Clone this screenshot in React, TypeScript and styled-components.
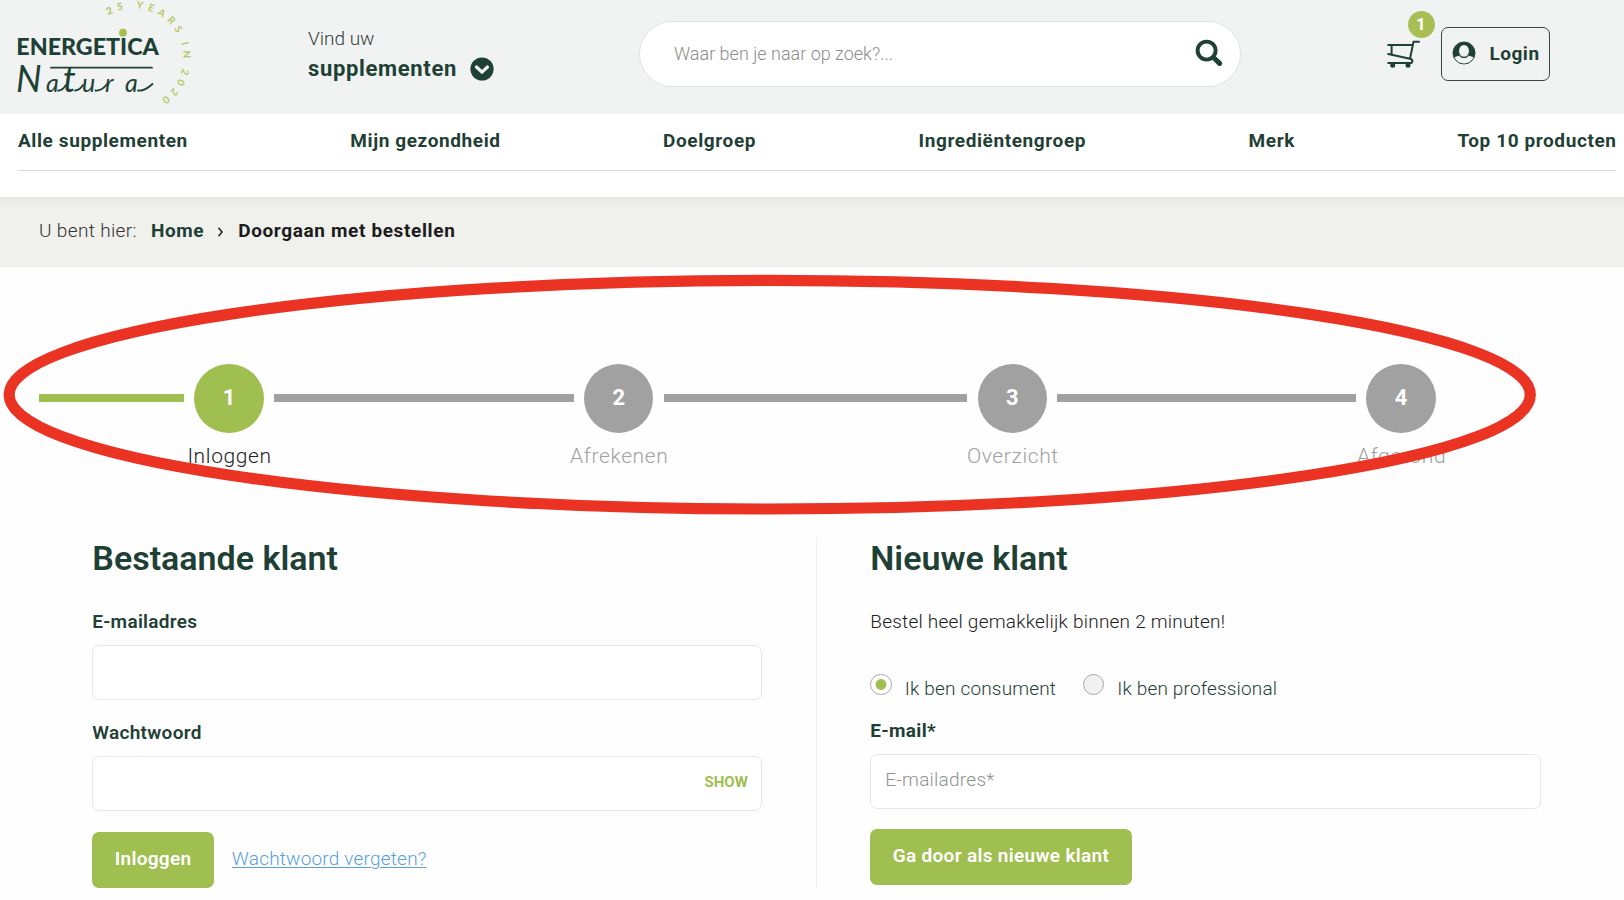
import React from "react";
import styled, { createGlobalStyle } from "styled-components";

const green = "#9fbf50";
const dark = "#1f4035";
const grey = "#a1a1a1";

const GlobalStyle = createGlobalStyle`
  *, *::before, *::after { box-sizing: border-box; }
  body {
    margin: 0;
    background: #fefefe;
    color: #222;
    font-family: Roboto, "Liberation Sans", sans-serif;
    font-size: 19px;
    overflow: hidden;
  }
  button, input { font: inherit; }
`;

const Page = styled.div`
  position: relative;
  width: 1624px;
  height: 900px;
  overflow: hidden;
`;

const TopBar = styled.header`
  display: flex;
  align-items: flex-start;
  height: 114px;
  background: #f0f3f2;
`;

const LogoLink = styled.a`
  flex: 0 0 308px;
  height: 114px;
`;

const Finder = styled.div`
  flex: 0 0 331px;
  padding-top: 26.5px;
  color: ${dark};
`;

const FinderHint = styled.div`
  font-weight: 300;
  line-height: 24px;
  color: #333f3a;
`;

const FinderTitle = styled.div`
  display: flex;
  align-items: center;
  gap: 13.5px;
  margin-top: 4px;
  font-size: 22px;
  font-weight: 700;
  line-height: 28px;
  letter-spacing: 0.66px;
`;

const SearchBox = styled.label`
  display: flex;
  align-items: center;
  justify-content: space-between;
  width: 602px;
  height: 66px;
  margin-top: 21px;
  padding: 0 17px 2px 34px;
  border: 1px solid #dfe3e1;
  border-radius: 33px;
  background: #fff;
`;

const SearchInput = styled.input`
  flex: 1;
  border: 0;
  outline: 0;
  padding: 0;
  background: transparent;
  font-size: 18px;
  font-weight: 300;
  &::placeholder { color: #8c8c8c; opacity: 1; }
`;

const CartButton = styled.a`
  position: relative;
  width: 34px;
  height: 28px;
  margin: 40px 0 0 145.5px;
`;

const CartCount = styled.span`
  position: absolute;
  left: 21px;
  top: -29px;
  width: 27px;
  height: 27px;
  border-radius: 50%;
  background: #a9bf55;
  color: #fff;
  font-size: 17px;
  font-weight: 700;
  line-height: 26px;
  text-align: center;
`;

const LoginButton = styled.button`
  display: flex;
  align-items: center;
  gap: 13.5px;
  width: 109.5px;
  height: 54px;
  margin: 27px 0 0 20px;
  padding: 0 0 2px 10.5px;
  border: 1.4px solid #3a4642;
  border-radius: 7px;
  background: transparent;
  color: ${dark};
  font-weight: 700;
  letter-spacing: 0.5px;
`;

const NavArea = styled.div`
  height: 83px;
  padding: 0 8px 0 18px;
  background: #fff;
`;

const Nav = styled.nav`
  display: flex;
  align-items: center;
  justify-content: space-between;
  height: 57px;
  padding-bottom: 3px;
  border-bottom: 1px solid #d6d9d8;
`;

const NavItem = styled.a`
  color: ${dark};
  font-weight: 700;
  letter-spacing: 0.6px;
  margin-right: -0.6px;
`;

const Crumbs = styled.div`
  display: flex;
  align-items: center;
  height: 69.5px;
  padding: 0 0 2px 39px;
  background: linear-gradient(#e6e6e2, #f0f0ec 11px);
  font-weight: 300;
  letter-spacing: 0.36px;
  color: #333;
`;

const Crumb = styled.a<{ $current?: boolean }>`
  font-weight: 700;
  letter-spacing: ${(p) => (p.$current ? 0.63 : 0.6)}px;
  color: ${(p) => (p.$current ? "#1c1c1c" : dark)};
`;

const HomeCrumb = styled(Crumb)`
  margin: 0 13px 0 14px;
`;

const CrumbArrow = styled.svg`
  margin: 3px 14px 0 0;
`;

const Stepper = styled.ol`
  display: flex;
  gap: 10.4px;
  margin: 0;
  padding: 97px 0 0 39px;
  height: 271.5px;
  list-style: none;
`;

const StepTrack = styled.li<{ $width: number; $active?: boolean }>`
  flex: 0 0 ${(p) => p.$width}px;
  height: 8px;
  margin-top: 30.9px;
  background: ${(p) => (p.$active ? green : grey)};
`;

const Step = styled.li<{ $active?: boolean }>`
  display: flex;
  flex: 0 0 69.4px;
  min-width: 0;
  flex-direction: column;
  align-items: center;
  color: ${(p) => (p.$active ? "#222" : grey)};
`;

const StepDot = styled.span<{ $active?: boolean }>`
  display: flex;
  align-items: center;
  justify-content: center;
  width: 69.4px;
  height: 69.4px;
  padding-bottom: 2px;
  border-radius: 50%;
  background: ${(p) => (p.$active ? green : grey)};
  color: #fff;
  font-size: 22px;
  font-weight: 700;
`;

const StepLabel = styled.span`
  margin: 9.5px -1px 0 0;
  font-size: 21px;
  font-weight: 300;
  line-height: 28px;
  letter-spacing: 0.63px;
  white-space: nowrap;
`;

const Marker = styled.svg`
  position: absolute;
  left: 0;
  top: 265px;
  pointer-events: none;
`;

const Forms = styled.main`
  display: grid;
  grid-template-columns: 670px 725px;
  column-gap: 54px;
  padding-left: 92.3px;
`;

const Column = styled.section`
  display: flex;
  flex-direction: column;
  align-items: flex-start;
  height: 350px;
`;

const NewColumn = styled(Column)`
  padding-left: 53px;
  border-left: 1px solid #f0f0f0;
`;

const Heading = styled.h2`
  margin: 0;
  color: ${dark};
  font-size: 34px;
  font-weight: 600;
  line-height: 40px;
`;

const Intro = styled.p`
  margin: 32px 0 43px;
  font-weight: 300;
  line-height: 24px;
  letter-spacing: 0.22px;
`;

const FieldLabel = styled.label<{ $gap: number; $bold?: boolean }>`
  margin: ${(p) => p.$gap}px 0 10.8px;
  color: ${dark};
  font-weight: ${(p) => (p.$bold ? 700 : 600)};
  line-height: 24px;
  letter-spacing: 0.3px;
`;

const Field = styled.div`
  display: flex;
  align-items: center;
  width: 100%;
  height: 55.2px;
  padding: 0 13.5px 0 14px;
  border: 1.5px solid #e6e6e6;
  border-radius: 7px;
  background: #fff;
`;

const FieldInput = styled.input`
  flex: 1;
  min-width: 0;
  padding: 0 0 4px;
  border: 0;
  outline: 0;
  background: transparent;
  font-weight: 300;
  letter-spacing: 0.25px;
  &::placeholder { color: #8d9390; opacity: 1; }
`;

const ShowToggle = styled.button`
  padding: 0 0 3px;
  border: 0;
  background: none;
  color: ${green};
  font-size: 15px;
  font-weight: 700;
`;

const Actions = styled.div`
  display: flex;
  align-items: center;
  gap: 18px;
  margin-top: 20.2px;
`;

const Button = styled.button`
  height: 56px;
  padding: 0 22.4px 3px;
  border: 0;
  border-radius: 7px;
  background: ${green};
  color: #fff;
  font-weight: 600;
  letter-spacing: 0.32px;
`;

const ForgotLink = styled.a`
  padding-bottom: 3px;
  color: #5aa0dc;
  font-weight: 300;
  letter-spacing: 0.2px;
  text-decoration: underline;
  text-decoration-thickness: 1px;
  text-underline-offset: 2px;
`;

const RadioRow = styled.div`
  display: flex;
  gap: 26.5px;
  line-height: 24px;
`;

const RadioOption = styled.label`
  display: flex;
  align-items: flex-start;
  gap: 13px;
  color: ${dark};
  font-weight: 300;
  letter-spacing: 0.17px;
`;

const RadioMark = styled.span<{ $on?: boolean }>`
  width: 21.5px;
  height: 21.5px;
  margin-top: -3.5px;
  border: 1.3px solid #a6a6a6;
  border-radius: 50%;
  background: ${(p) => (p.$on ? `radial-gradient(circle, ${green} 5px, #fff 5.8px)` : "#f1f1f1")};
`;

const Logo = () => (
  <svg width="200" height="114" viewBox="0 0 200 114">
    <defs>
      <path id="ring" d="M101.9 20 A49.5 49.5 0 1 1 142.3 106.6" />
    </defs>
    <g fontFamily="Lato, sans-serif" fill={dark}>
      <text x="16.3" y="55.3" fontSize="23" fontWeight="900" textLength="142.5" lengthAdjust="spacingAndGlyphs">ENERGETICA</text>
      <text y="91.5" fontStyle="italic" fontWeight="400">
        <tspan x="16" fontSize="36">N</tspan>
        <tspan x="46" fontSize="25">a</tspan>
        <tspan x="63" fontSize="36">t</tspan>
        <tspan x="82 105 125" fontSize="25">ura</tspan>
      </text>
    </g>
    <g fill="none" stroke={dark} strokeWidth="1.8" strokeLinecap="round">
      <path d="M51 67.7H152" />
      <path d="M58 90.500C61 91 64 88 66 85M75 90.5C78 90.5 81 88 83 85M95.5 90.5C100 91 104 88 107 84M138 90.5C143 91.5 148 88 152.5 84" />
    </g>
    <circle cx="123" cy="32.7" r="3.9" fill="#a5bf4c" />
    <g fill="#b3c968" fontFamily="Lato, sans-serif" fontSize="10" fontWeight="700">
      <text fontWeight="900" letterSpacing="4.6"><textPath href="#ring" startOffset="8">25</textPath></text>
      <text letterSpacing="4.6"><textPath href="#ring" startOffset="37">YEARS</textPath></text>
      <text letterSpacing="5"><textPath href="#ring" startOffset="97">IN</textPath></text>
      <text letterSpacing="4.8"><textPath href="#ring" startOffset="122.5">2020</textPath></text>
    </g>
  </svg>
);

const ChevronBadge = () => (
  <svg width="24" height="24" viewBox="0 0 24 24">
    <circle cx="12" cy="12" r="11.6" fill={dark} />
    <path d="M6.5 10 L12 15.2 L17.5 10" fill="none" stroke="#f0f3f2" strokeWidth="3.2" strokeLinecap="round" strokeLinejoin="round" />
  </svg>
);

const SearchIcon = () => (
  <svg width="28" height="28" viewBox="0 0 28 28">
    <circle cx="11.6" cy="11.6" r="9" fill="none" stroke={dark} strokeWidth="3.9" />
    <path d="M19 19 L24.6 24.4" stroke={dark} strokeWidth="5" strokeLinecap="round" />
  </svg>
);

const CartIcon = () => (
  <svg width="34" height="28" viewBox="0 0 34 28" fill="none" stroke={dark} strokeWidth="2" strokeLinejoin="round" strokeLinecap="round">
    <path d="M32 1.7H26.5L23 18.8L1.2 14M25 5H1.2M4.6 5V14M23 18.8C26 19.4 26.3 23 23.2 23H1.2" />
    <circle cx="5.7" cy="25.2" r="1.5" fill={dark} />
    <circle cx="21" cy="25.2" r="1.5" fill={dark} />
  </svg>
);

const UserIcon = () => (
  <svg width="24" height="24" viewBox="0 0 24 24">
    <circle cx="12" cy="12" r="11" fill={dark} stroke={dark} strokeWidth="1" />
    <path d="M2.4 16.6C4.5 14.9 7 15.3 8.4 14.6C9.8 17 14.2 17 15.6 14.6C17 15.3 19.5 14.9 21.6 16.6A10.8 10.8 0 0 1 2.4 16.6Z" fill="#f0f3f2" />
    <ellipse cx="12" cy="9.9" rx="5" ry="5.9" fill="#f0f3f2" />
    <path d="M8 15C9.6 17.4 14.4 17.4 16 15" fill="none" stroke={dark} strokeWidth="1.1" />
  </svg>
);

const navItems = ["Alle supplementen", "Mijn gezondheid", "Doelgroep", "Ingrediëntengroep", "Merk", "Top 10 producten"];
const steps = [
  { label: "Inloggen", track: 145 },
  { label: "Afrekenen", track: 299.5 },
  { label: "Overzicht", track: 303.4 },
  { label: "Afgerond", track: 298.6 },
];

export default function App() {
  return (
    <Page>
      <GlobalStyle />
      <TopBar>
        <LogoLink><Logo /></LogoLink>
        <Finder>
          <FinderHint>Vind uw</FinderHint>
          <FinderTitle>supplementen <ChevronBadge /></FinderTitle>
        </Finder>
        <SearchBox>
          <SearchInput placeholder="Waar ben je naar op zoek?..." />
          <SearchIcon />
        </SearchBox>
        <CartButton><CartIcon /><CartCount>1</CartCount></CartButton>
        <LoginButton><UserIcon />Login</LoginButton>
      </TopBar>
      <NavArea>
        <Nav>{navItems.map((n) => <NavItem key={n}>{n}</NavItem>)}</Nav>
      </NavArea>
      <Crumbs>
        U bent hier:
        <HomeCrumb>Home</HomeCrumb>
        <CrumbArrow width="7" height="10" viewBox="0 0 7 10" fill="none" stroke="#222" strokeWidth="1.5">
          <path d="M1.5 0.8L5 5L1.5 9.2" />
        </CrumbArrow>
        <Crumb $current>Doorgaan met bestellen</Crumb>
      </Crumbs>
      <Stepper>
        {steps.map((s, i) => (
          <React.Fragment key={s.label}>
            <StepTrack $width={s.track} $active={i === 0} />
            <Step $active={i === 0}>
              <StepDot $active={i === 0}>{i + 1}</StepDot>
              <StepLabel>{s.label}</StepLabel>
            </Step>
          </React.Fragment>
        ))}
      </Stepper>
      <Forms>
        <Column>
          <Heading>Bestaande klant</Heading>
          <FieldLabel $gap={32}>E-mailadres</FieldLabel>
          <Field><FieldInput /></Field>
          <FieldLabel $gap={21.5}>Wachtwoord</FieldLabel>
          <Field><FieldInput type="password" /><ShowToggle>SHOW</ShowToggle></Field>
          <Actions>
            <Button>Inloggen</Button>
            <ForgotLink>Wachtwoord vergeten?</ForgotLink>
          </Actions>
        </Column>
        <NewColumn>
          <Heading>Nieuwe klant</Heading>
          <Intro>Bestel heel gemakkelijk binnen 2 minuten!</Intro>
          <RadioRow>
            <RadioOption><RadioMark $on />Ik ben consument</RadioOption>
            <RadioOption><RadioMark />Ik ben professional</RadioOption>
          </RadioRow>
          <FieldLabel $gap={18} $bold>E-mail*</FieldLabel>
          <Field><FieldInput placeholder="E-mailadres*" /></Field>
          <Actions><Button>Ga door als nieuwe klant</Button></Actions>
        </NewColumn>
      </Forms>
      <Marker width="1624" height="260" viewBox="0 265 1624 260">
        <ellipse cx="769.7" cy="394.7" rx="760.6" ry="114.3" fill="none" stroke="#ea3323" strokeWidth="11.2" />
      </Marker>
    </Page>
  );
}
